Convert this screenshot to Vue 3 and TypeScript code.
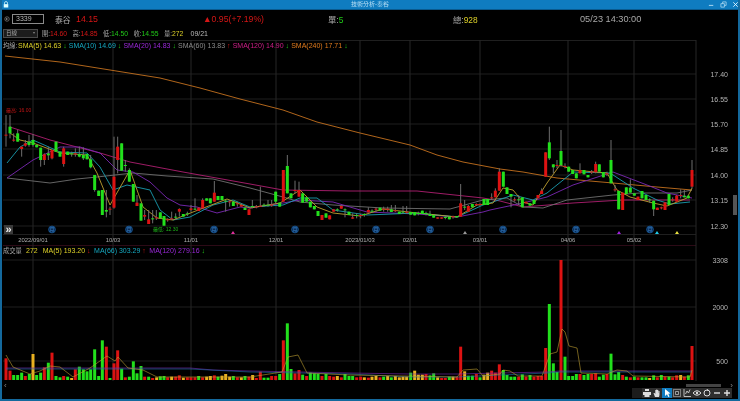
<script setup lang="ts">
type Tone = 'r' | 'g' | 'y'
interface Candle { x: number; top: number; h: number; hi: number; lo: number; tone: Tone }
interface Bar { x: number; top: number; h: number; tone: Tone }

const seg1 = '18,74,77,15,110,r 30,50,70,15,85,g 41,89,92,70,95,r 53,70,95,60,95,g 65,110,117,110,140,r 76,100,107,90,110,r 87,95,105,75,110,g 99,90,105,72,110,g 110,105,112,105,112,g 122,113,150,113,170,g 133,133,150,130,165,r 145,130,136,110,150,g 156,120,145,120,148,r 168,95,125,95,125,g 180,125,140,125,140,g 191,115,162,110,170,r 203,125,135,125,135,g 215,130,133,125,140,g 226,130,133,115,140,r 238,132,140,110,142,g 250,135,145,112,150,g 261,132,148,132,148,g 272,148,172,135,175,g 284,195,240,195,245,g 296,242,258,242,258,g 307,240,315,240,315,g 319,300,305,240,322,g 330,296,299,290,315,r 342,200,293,80,296,r 353,110,150,80,190,r 365,100,182,100,182,g 376,165,168,150,185,g 388,180,215,175,215,g 400,222,275,222,275,g 411,278,288,255,288,r 423,280,332,280,332,g 434,315,320,300,330,r 446,328,342,300,342,r 458,325,328,300,340,g 469,322,325,300,330,r 481,307,325,307,325,g 492,318,347,318,347,g 503,328,331,325,335,r 515,325,328,305,330,r 527,320,323,310,330,g 538,297,305,295,320,r 550,312,320,312,320,g 562,310,313,305,318,g 573,295,300,285,305,r 585,296,299,265,300,g 596,293,303,293,303,r 608,270,295,265,295,r 620,265,272,265,272,g 631,265,280,265,280,g 643,248,275,213,275,r 654,258,270,258,270,g 666,258,270,258,270,g 677,272,275,270,305,g 689,274,277,270,290,r 700,275,288,275,288,g 712,280,283,275,290,r 724,285,290,280,290,r 735,293,300,293,300,g 747,298,315,298,315,r'
const seg2 = '7,288,291,270,295,g 19,289,292,285,295,r 31,287,290,230,290,r 42,284,287,280,290,g 54,284,287,270,290,g 65,284,287,270,290,r 77,245,275,245,280,g 89,278,290,278,290,g 100,180,275,180,275,r 112,168,250,135,250,g 123,250,265,250,265,g 135,240,243,212,250,r 147,240,260,215,260,r 158,250,278,250,278,g 170,262,275,262,275,g 181,275,292,275,292,g 193,288,298,288,298,g 204,303,318,303,318,g 216,315,330,315,330,r 228,310,323,310,323,g 239,316,328,316,328,r 251,298,305,298,305,r 262,298,301,295,305,g 274,288,296,288,296,r 285,298,301,295,322,g 297,305,315,305,315,g 308,322,326,310,326,r 320,315,318,310,325,g 332,315,318,312,325,r 343,312,315,310,320,g 355,300,307,292,307,r 366,302,305,298,308,g 378,296,299,292,305,r 390,293,302,293,302,g 401,296,299,290,305,r 413,296,299,290,305,r 424,298,306,285,306,g 436,301,304,285,306,r 448,305,312,305,312,g 459,305,308,288,312,g 470,305,308,288,312,r 482,306,314,306,314,g 494,306,316,306,316,g 505,309,312,305,316,g 517,302,312,302,312,g 528,309,312,305,316,g 540,312,318,302,318,g 551,315,323,315,323,g 563,322,326,322,326,r 575,322,326,322,326,r 586,321,324,318,328,g 598,320,328,320,328,g 609,319,322,317,326,r 621,318,322,318,322,g 632,280,320,222,320,r 644,290,293,270,300,g 655,288,305,285,305,r 667,282,292,282,292,g 679,282,285,280,288,r 690,282,285,280,288,r 702,267,285,267,285,g 713,267,285,267,285,g 725,262,265,250,270,r'
const seg3 = '16,242,262,235,262,r 28,185,242,175,242,r 40,185,230,185,230,g 51,232,252,232,252,g 63,252,260,252,292,g 74,268,271,262,275,r 86,268,271,255,285,g 97,262,292,262,292,g 108,275,280,275,280,r 120,280,287,280,287,g 132,270,282,270,282,g 144,255,265,255,265,r 155,242,252,235,252,r 167,127,200,127,200,r 178,97,145,50,150,g 190,163,172,163,190,g 201,165,168,150,175,r 213,123,165,60,170,g 225,168,171,160,175,r 236,170,185,170,185,g 248,180,192,180,192,g 259,190,205,190,205,g 270,180,190,160,190,r 282,180,193,180,193,g 294,195,202,195,202,g 305,185,188,180,192,r 317,162,187,155,190,r 328,163,185,163,185,g 340,186,202,186,202,g 351,190,193,185,198,r 363,150,220,90,220,g 375,238,241,225,245,r 386,243,298,243,298,g 398,248,300,248,300,r 409,232,252,232,252,g 421,233,248,208,248,g 433,250,257,250,257,g 444,260,270,260,270,r 456,243,265,243,265,g 468,255,270,255,270,g 479,268,271,265,278,g 491,272,298,272,318,g 502,293,300,293,300,r 514,292,295,290,298,r 525,277,300,277,300,r 537,252,285,252,285,g 548,268,271,262,275,r 560,257,275,255,275,r 572,255,258,238,265,r 583,257,262,240,262,g 595,257,265,257,265,g 606,180,230,150,235,r'

function parseCandles(src: string, off: number): Candle[] {
  return src.split(' ').map((item) => {
    const p = item.split(',')
    const top = 110 + Number(p[1]) / 3
    const bot = 110 + Number(p[2]) / 3
    return {
      x: off + Number(p[0]) / 3,
      top,
      h: Math.max(bot - top, 1),
      hi: 110 + Number(p[3]) / 3,
      lo: 110 + Number(p[4]) / 3,
      tone: p[5] as Tone,
    }
  })
}
const candles: Candle[] = [...parseCandles(seg1, 0), ...parseCandles(seg2, 250), ...parseCandles(seg3, 490)]

const vol1 = '18,r,175 30,r,212 41,g,225 53,g,225 65,g,218 76,r,228 88,g,222 99,y,162 110,g,225 122,g,218 133,r,202 145,g,188 156,r,158 168,g,228 180,g,232 191,r,228 203,g,230 215,y,234 226,r,208 238,g,200 250,g,208 261,g,214 272,g,208 284,g,148 296,g,228 307,g,121 319,r,140 330,g,234 342,r,190 353,r,151 365,g,206 376,r,232 388,g,230 400,g,184 411,g,220 423,g,198 434,r,230 446,g,230 458,r,234 470,y,232 481,g,229 492,g,228 503,r,232 515,y,230 527,r,230 538,r,226 550,y,233 562,r,232 573,r,232 585,r,232 596,g,228 608,r,232 620,y,230 631,y,228 643,r,226 654,g,230 666,y,227 677,y,222 689,y,230 700,g,228 712,r,232 724,y,232 735,g,228 747,r,230'
const vol2 = '8,y,225 19,r,234 31,r,215 42,g,233 54,g,233 65,r,228 77,r,228 89,g,222 100,r,121 112,g,70 123,g,207 135,r,220 147,r,210 158,g,224 170,r,228 181,g,218 193,g,220 204,g,222 216,r,228 228,g,222 239,r,228 251,r,230 262,y,228 274,r,232 285,g,222 297,g,228 308,g,228 320,r,232 332,r,230 343,y,232 355,r,233 366,y,230 378,y,228 390,r,232 401,g,230 413,y,228 424,g,232 436,y,228 448,y,232 459,y,230 470,y,230 482,g,218 494,y,212 505,y,224 517,y,224 528,r,222 540,g,226 551,g,220 563,y,232 575,r,234 586,r,234 598,g,230 609,y,230 621,r,230 632,r,140 644,y,214 655,g,227 667,g,227 679,r,222 690,g,232 702,y,224 713,y,218'
const vol3 = '5,r,362 16,r,368 28,r,343 40,g,360 51,g,375 63,g,380 74,g,380 86,r,380 97,g,373 108,r,380 120,g,375 132,r,380 144,r,378 155,r,378 167,r,294 178,g,162 190,g,340 201,g,366 213,r,30 225,g,320 236,g,378 248,g,378 259,g,372 270,r,372 282,g,375 294,g,372 305,r,372 317,r,370 328,g,380 340,g,374 351,r,372 363,g,311 375,g,373 386,g,366 398,r,375 409,g,380 421,r,382 433,g,380 444,r,382 456,g,382 468,g,382 479,y,384 491,g,376 502,r,382 514,g,375 525,r,380 537,g,380 548,r,382 560,r,376 572,y,375 583,r,380 595,g,376 606,r,288'

function parseBars(src: string, off: number, yOff: number): Bar[] {
  return src.split(' ').map((item) => {
    const p = item.split(',')
    const top = yOff + Number(p[2]) / 3
    return { x: off + Number(p[0]) / 3, top, h: 380 - top, tone: p[1] as Tone }
  })
}
const bars: Bar[] = [...parseBars(vol1, 0, 300), ...parseBars(vol2, 250, 300), ...parseBars(vol3, 490, 250)]

const lines = [
  { cls: 'l-orange', pts: '5,56 60,62 110,70 160,78 200,88 240,99 283,110 317,122 360,133 410,145 437,155 463,162 500,169 523,172 557,178 590,181 613,183 657,187 692,190' },
  { cls: 'l-pink', pts: '10,127 50,140 100,153 130,162 183,172 250,184 283,190 350,191 417,191 483,198 500,201 523,207 573,203 623,200 690,200' },
  { cls: 'l-gray', pts: '7,178 50,183 77,179 97,177 133,173 167,176 213,179 250,188 283,197 300,202 333,205 383,208 450,209 483,200 507,198 523,207 543,208 567,200 613,195 640,193 677,193 692,190' },
  { cls: 'l-purple', pts: '7,178 33,160 60,147 80,147 100,153 117,170 133,172 150,182 167,198 180,205 197,207 217,213 240,207 250,208 283,203 300,200 333,202 367,212 417,214 457,217 483,212 490,210 523,203 547,197 573,185 613,172 647,185 667,193 692,198' },
  { cls: 'l-cyan', pts: '7,163 20,147 33,140 60,152 87,153 100,167 113,190 127,185 150,190 160,210 173,220 190,217 213,205 233,200 250,207 283,205 300,198 317,198 333,210 367,215 417,213 457,217 483,205 490,203 513,195 533,200 547,193 573,172 610,173 633,188 657,200 670,204 690,202' },
  { cls: 'l-tan', pts: '10,133 20,140 33,143 60,153 87,155 97,173 110,205 130,170 143,207 157,218 173,220 193,212 227,199 250,208 280,203 300,190 317,207 333,213 360,216 383,209 417,213 457,217 477,205 493,203 503,188 513,190 523,202 533,205 547,183 560,165 573,170 607,173 617,190 630,197 653,203 667,206 687,198 692,188' },
]
const volLines = [
  { cls: 'l-purple', pts: '6,368 190,368 213,370 250,371 350,373 410,374 457,374 500,373 547,372 560,371 692,371' },
  { cls: 'l-blue', pts: '6,369 190,369 250,372 350,374 410,377 457,377 500,375 547,373 560,372 692,372' },
  { cls: 'l-tan', pts: '6,355 13,367 30,374 40,371 50,366 60,367 73,377 90,368 107,356 115,361 118,357 128,368 143,370 157,377 250,377 282,372 288,357 298,355 307,373 350,375 457,377 463,370 477,369 483,376 500,374 503,370 510,371 518,376 542,376 550,354 557,352 562,329 565,332 569,346 577,348 581,373 607,374 617,370 627,371 633,376 690,377 692,370' },
]

const vGrid = [33, 113, 191, 276, 360, 410, 480, 568, 634]
const hGrid = [74, 99, 124, 149, 175, 200, 226]
const priceTicks = [
  { y: 74, t: '17.40' }, { y: 99, t: '16.55' }, { y: 124, t: '15.70' }, { y: 149, t: '14.85' },
  { y: 175, t: '14.00' }, { y: 200, t: '13.15' }, { y: 226, t: '12.30' },
]
const volTicks = [{ y: 260, t: '3308' }, { y: 307, t: '2000' }, { y: 361, t: '500' }]
const dates = [
  { x: 33, t: '2022/09/01' }, { x: 113, t: '10/03' }, { x: 191, t: '11/01' }, { x: 276, t: '12/01' },
  { x: 360, t: '2023/01/03' }, { x: 410, t: '02/01' }, { x: 480, t: '03/01' }, { x: 568, t: '04/06' }, { x: 634, t: '05/02' },
]
const moons = [52, 129, 214, 295, 376, 430, 503, 576, 650]
const flags = [
  { x: 233, cls: 'f-pink' }, { x: 465, cls: 'f-gray' }, { x: 619, cls: 'f-purple' }, { x: 657, cls: 'f-cyan' }, { x: 677, cls: 'f-yellow' },
]
const smaLegend = [
  { t: 'SMA(5) 14.63', cls: 'c-yellow', a: '↓', ac: 'c-green' },
  { t: 'SMA(10) 14.69', cls: 'c-cyan', a: '↓', ac: 'c-green' },
  { t: 'SMA(20) 14.83', cls: 'c-purple', a: '↓', ac: 'c-green' },
  { t: 'SMA(60) 13.83', cls: 'c-gray', a: '↑', ac: 'c-red' },
  { t: 'SMA(120) 14.90', cls: 'c-pink', a: '↓', ac: 'c-green' },
  { t: 'SMA(240) 17.71', cls: 'c-orange', a: '↓', ac: 'c-green' },
]
const volLegend = [
  { t: 'MA(5) 193.20', cls: 'c-yellow', a: '↓', ac: 'c-red' },
  { t: 'MA(66) 303.29', cls: 'c-cyan', a: '↑', ac: 'c-red' },
  { t: 'MA(120) 279.16', cls: 'c-purple', a: '↓', ac: 'c-green' },
]
const ohlc = [
  { k: '開:', v: '14.60', cls: 'c-red' },
  { k: '高:', v: '14.85', cls: 'c-red' },
  { k: '低:', v: '14.50', cls: 'c-green' },
  { k: '收:', v: '14.55', cls: 'c-green' },
  { k: '量:', v: '272', cls: 'c-yellow' },
]
</script>

<template>
  <div class="win">
    <header class="title">
      <svg class="lock" viewBox="0 0 8 9"><path d="M2 4V2.600a2 2 0 0 1 4 0V4" fill="none" stroke="#dff" stroke-width="1" /><rect x="1" y="4" width="6" height="4.500" fill="#dff" /></svg>
      <span class="title-text">技術分析-泰谷</span>
      <span class="ctrls">
        <svg viewBox="0 0 8 8"><path d="M1 5h5" stroke="#bfe4f7" stroke-width="1" /></svg>
        <svg viewBox="0 0 8 8"><path d="M1 3h4v4H1zM3 3V1h4v4H5" fill="none" stroke="#bfe4f7" stroke-width=".8" /></svg>
        <svg viewBox="0 0 8 8"><path d="M1.500 1.500l5 5M6.500 1.500l-5 5" stroke="#e6f6ff" stroke-width="1" /></svg>
      </span>
    </header>

    <section class="quote">
      <svg class="go" viewBox="0 0 8 8"><circle cx="4" cy="4" r="3" fill="none" stroke="#aaa" stroke-width=".7" /><path d="M3 2.400L5.200 4 3 5.600z" fill="#aaa" /></svg>
      <div class="code">3339</div>
      <div class="q-name">泰谷</div>
      <div class="q-price c-red">14.15</div>
      <div class="q-change c-red">▲0.95(+7.19%)</div>
      <div class="q-single"><span class="c-muted">單:</span><span class="c-green">5</span></div>
      <div class="q-total"><span class="c-muted">總:</span><span class="c-yellow">928</span></div>
      <div class="q-time">05/23 14:30:00</div>
    </section>

    <section class="ohlc">
      <div class="period">日線<i class="caret"></i></div>
      <div v-for="o in ohlc" :key="o.k" class="o-item"><span class="c-muted cjk">{{ o.k }}</span><span :class="o.cls">{{ o.v }}</span></div>
      <div class="o-date">09/21</div>
    </section>

    <section class="panel panel-main">
      <svg class="chart" width="736" height="205" viewBox="2 40 736 205">
        <line v-for="y in hGrid" :key="y" x1="3" x2="696" :y1="y" :y2="y" class="grid-h" />
        <line x1="3" x2="696" y1="40.500" y2="40.500" class="grid-h" />
        <line x1="3" x2="696" y1="234.500" y2="234.500" class="grid-h" />
        <line v-for="x in vGrid" :key="x" :x1="x" :x2="x" y1="40" y2="245" class="grid-v" />
        <line x1="696" x2="696" y1="40" y2="245" class="grid-v" />
        <polyline v-for="l in lines" :key="l.cls" :points="l.pts" :class="['ma', l.cls]" />
        <g v-for="(c, i) in candles" :key="i">
          <line :x1="c.x" :x2="c.x" :y1="c.hi" :y2="c.lo" class="wick" />
          <rect :x="c.x - 1.500" :y="c.top" width="3" :height="c.h" :class="'t-' + c.tone" />
        </g>
        <text x="6" y="112" class="mini c-red">最高: 16.00</text>
        <text x="153" y="230.500" class="mini c-green">最低: 12.30</text>
        <g v-for="x in moons" :key="x">
          <circle :cx="x" cy="229.500" r="3.400" class="moon" />
          <text :x="x" y="231.300" class="moon-t">月</text>
        </g>
        <polygon v-for="f in flags" :key="f.x" :points="`${f.x - 2},234 ${f.x + 2},234 ${f.x},231`" :class="f.cls" />
        <text v-for="p in priceTicks" :key="p.t" x="728" :y="p.y + 2.500" class="tick">{{ p.t }}</text>
        <text v-for="d in dates" :key="d.t" :x="d.x" y="241.500" class="date">{{ d.t }}</text>
      </svg>
      <div class="legend legend-main">
        <span class="lg-key c-muted cjk">均線:</span>
        <span v-for="s in smaLegend" :key="s.t" class="lg-item"><span :class="s.cls">{{ s.t }}</span> <span :class="s.ac">{{ s.a }}</span></span>
      </div>
      <button class="expand" type="button">»</button>
      <div class="grip"></div>
    </section>

    <section class="panel panel-vol">
      <svg class="chart" width="736" height="138" viewBox="2 245 736 138">
        <line x1="3" x2="696" y1="245.500" y2="245.500" class="grid-top" />
        <line v-for="t in volTicks" :key="t.t" x1="3" x2="696" :y1="t.y" :y2="t.y" class="grid-h" />
        <line v-for="x in vGrid" :key="x" :x1="x" :x2="x" y1="245" y2="381" class="grid-v" />
        <line x1="696" x2="696" y1="245" y2="381" class="grid-v" />
        <rect v-for="(b, i) in bars" :key="i" :x="b.x - 1.500" :y="b.top" width="3" :height="b.h" :class="'t-' + b.tone" />
        <polyline v-for="l in volLines" :key="l.cls" :points="l.pts" :class="['ma', 'thin', l.cls]" />
        <text v-for="t in volTicks" :key="t.t" x="728" :y="t.y + 2.500" class="tick">{{ t.t }}</text>
      </svg>
      <div class="legend legend-vol">
        <span class="c-muted cjk vol-key">成交量</span>
        <span class="c-yellow vol-now">272</span>
        <span v-for="s in volLegend" :key="s.t" class="lg-vol"><span :class="s.cls">{{ s.t }}</span> <span :class="s.ac">{{ s.a }}</span></span>
      </div>
    </section>

    <footer class="foot">
      <div class="scroll-row">
        <span class="chev">‹</span>
        <span class="track"></span>
        <span class="chev chev-r">›</span>
      </div>
      <div class="tools">
        <span class="tool dim"></span>
        <span class="tool"><svg viewBox="0 0 10 10"><path d="M3 1h4v2H3zM1 4h8v3H7.500V9h-5V7H1z" fill="#ddd" /></svg></span>
        <span class="tool"><svg viewBox="0 0 10 10"><path d="M3 9L1.500 5l1 0 .8 1V2h1v2.500V1.500h1V4.500V2h1v3h.2V3h1v4L7 9z" fill="#ddd" /></svg></span>
        <span class="tool on"><svg viewBox="0 0 10 10"><path d="M3 1v7l2-1.800L6.300 9l1.200-.6L6.300 5.800 8.500 5.500z" fill="#fff" /></svg></span>
        <span class="tool"><svg viewBox="0 0 10 10"><path d="M1.500 1.500h7v7h-7z" fill="none" stroke="#ccc" stroke-dasharray="1 1" /><path d="M3.500 3.500h3v3h-3z" fill="none" stroke="#ccc" stroke-width=".7" /></svg></span>
        <span class="tool"><svg viewBox="0 0 10 10"><path d="M2 1v7.500h7M3.500 6L5 3l1.500 2L8 1.500" fill="none" stroke="#ccc" stroke-width=".9" /></svg></span>
        <span class="tool"><svg viewBox="0 0 10 10"><path d="M1 5q4-4.500 8 0q-4 4.500-8 0z" fill="none" stroke="#ddd" /><circle cx="5" cy="5" r="1.200" fill="#ddd" /></svg></span>
        <span class="tool"><svg viewBox="0 0 10 10"><circle cx="5" cy="5" r="3" fill="none" stroke="#ddd" /><path d="M5 1v2l1.500-1z" fill="#ddd" /></svg></span>
        <span class="tool"><svg viewBox="0 0 10 10"><path d="M2 5h6" stroke="#ddd" stroke-width="1.400" /></svg></span>
        <span class="tool"><svg viewBox="0 0 10 10"><path d="M2 5h6M5 2v6" stroke="#ddd" stroke-width="1.400" /></svg></span>
      </div>
    </footer>
  </div>
</template>

<style>
html, body { background: #000; }
</style>

<style scoped>
.win {
  width: 740px;
  height: 401px;
  box-sizing: border-box;
  background: #000;
  border-left: 2px solid #14699d;
  border-right: 2px solid #14699d;
  border-bottom: 2px solid #14699d;
  overflow: hidden;
  display: flex;
  flex-direction: column;
  font-family: "Liberation Sans", "Noto Sans CJK TC", sans-serif;
  color: #a8a8a8;
  filter: blur(.2px);
}
.cjk { font-size: 6.300px; }
.title {
  margin: 0 -2px;
  height: 10px;
  flex: none;
  background: #0f7cc0;
  border-bottom: 1px solid #0a5a8e;
  box-sizing: border-box;
  display: flex;
  align-items: center;
  justify-content: center;
  position: relative;
  color: #b9dff5;
  font-size: 6px;
}
.lock { position: absolute; left: 3px; top: 1px; width: 6px; height: 7px; }
.ctrls { position: absolute; right: 1px; top: 1px; display: flex; gap: 5px; }
.ctrls svg { width: 7px; height: 7px; }
.title-text { line-height: 9px; }

.quote {
  height: 16px;
  flex: none;
  display: flex;
  align-items: center;
  font-size: 10px;
  padding-top: 2px;
  box-sizing: border-box;
}
.go { width: 6px; height: 6px; margin-left: 2px; flex: none; }
.code {
  margin-left: 2px;
  width: 32px;
  height: 10px;
  box-sizing: border-box;
  border: 1px solid #8a8a8a;
  font-size: 7px;
  line-height: 8px;
  padding-left: 3px;
  color: #b8b8b8;
  flex: none;
}
.q-name { margin-left: 11px; width: 21px; flex: none; font-size: 7.800px; color: #b4b4b4; }
.q-price { width: 127px; flex: none; font-size: 8.800px; }
.q-change { width: 125px; flex: none; font-size: 8.700px; }
.q-single { width: 125px; flex: none; font-size: 8.400px; }
.q-total { width: 127px; flex: none; font-size: 8.400px; }
.q-time { font-size: 9.200px; }

.ohlc {
  height: 14px;
  flex: none;
  display: flex;
  align-items: center;
  font-size: 6.800px;
  position: relative;
  padding-left: 1px;
}
.period {
  width: 35px;
  height: 9px;
  box-sizing: border-box;
  background: #1c1c1c;
  border: 1px solid #4a4a4a;
  font-size: 5.500px;
  line-height: 7px;
  padding-left: 2px;
  position: relative;
  margin-right: 4px;
  color: #aaa;
}
.caret {
  position: absolute;
  right: 2px;
  top: 2.500px;
  border-left: 1.500px solid transparent;
  border-right: 1.500px solid transparent;
  border-top: 2px solid #888;
}
.o-item { width: 30.500px; flex: none; white-space: nowrap; }
.o-date { margin-left: -4px; color: #b8b8b8; font-size: 7px; }

.panel { position: relative; flex: none; }
.panel-main { height: 205px; }
.panel-vol { height: 138px; }
.chart { display: block; }

.legend {
  position: absolute;
  display: flex;
  align-items: center;
  font-size: 7px;
  line-height: 10px;
  white-space: nowrap;
}
.legend-main { left: 1px; top: 1px; }
.lg-key { width: 15px; flex: none; }
.lg-item { margin-right: 2.100px; }
.legend-vol { left: 1px; top: 1px; }
.vol-key { width: 23px; flex: none; }
.vol-now { margin-right: 5px; }
.lg-vol { margin-right: 3.500px; }

.expand {
  position: absolute;
  left: 2px;
  top: 185px;
  width: 9px;
  height: 9px;
  padding: 0;
  border: none;
  background: #3a3a3a;
  color: #eee;
  font: bold 11px/7px "Liberation Sans", sans-serif;
}
.grip {
  position: absolute;
  right: 1px;
  top: 155px;
  width: 4px;
  height: 20px;
  background: #555;
}

.foot { flex: 1; min-height: 0; display: flex; flex-direction: column; }
.scroll-row { height: 5px; display: flex; align-items: center; flex: none; position: relative; }
.chev { color: #888; font-size: 8px; line-height: 5px; margin-left: 2px; }
.track {
  margin-left: auto;
  width: 35px;
  height: 3px;
  background: #444;
  margin-right: 9px;
}
.chev-r { margin-left: 0; margin-right: 5px; }
.tools {
  display: flex;
  justify-content: flex-end;
  padding-right: 6px;
  height: 10px;
  flex: none;
}
.tool {
  width: 10px;
  height: 10px;
  background: #2e2e2e;
  display: block;
}
.tool svg { display: block; width: 10px; height: 10px; }
.tool.on { background: #0f7cc0; }
.tool.dim { background: #1c1c1c; }

.grid-h { stroke: #1f1f1f; stroke-width: 1; }
.grid-top { stroke: #2c0a16; stroke-width: 1; }
.grid-v { stroke: #262626; stroke-width: 1; }
.wick { stroke: #6e6e6e; stroke-width: 1; }
.ma { fill: none; stroke-width: .9; }
.ma.thin { stroke-width: .6; }
.l-orange { stroke: #c4701e; }
.l-pink { stroke: #b01f72; }
.l-gray { stroke: #6f6f6f; }
.l-purple { stroke: #7a28b4; }
.l-cyan { stroke: #1a9db0; }
.l-blue { stroke: #1f6fa8; }
.l-tan { stroke: #c0a030; }
.t-r { fill: #dd1212; }
.t-g { fill: #22e01c; }
.t-y { fill: #e8b020; }
.tick { fill: #b4b4b4; font-size: 7px; text-anchor: end; }
.date { fill: #adadad; font-size: 5.900px; text-anchor: middle; }
.mini { font-size: 5px; }
text.c-red { fill: #c01414; }
text.c-green { fill: #1cb018; }
.moon { fill: #0b2b55; stroke: #1a5ea0; stroke-width: .8; }
.moon-t { fill: #3b8ad0; font-size: 5px; text-anchor: middle; }
.f-pink { fill: #e0309c; }
.f-gray { fill: #999; }
.f-purple { fill: #a020e0; }
.f-cyan { fill: #20c8e8; }
.f-yellow { fill: #e8e040; }

.c-red { color: #d61616; }
.c-green { color: #20c818; }
.c-yellow { color: #dcd028; }
.c-muted { color: #a8a8a8; }
.c-cyan { color: #15a8c0; }
.c-purple { color: #9a28d8; }
.c-gray { color: #8a8a8a; }
.c-pink { color: #d01e88; }
.c-orange { color: #e07a1c; }
</style>
